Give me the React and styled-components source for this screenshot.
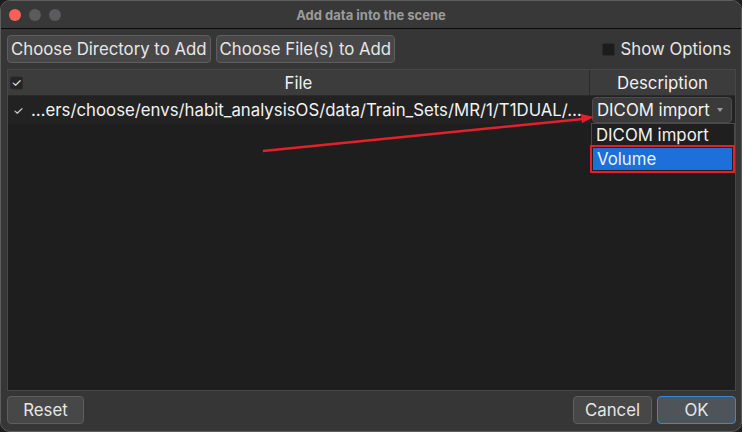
import React from "react";
import styled, { createGlobalStyle } from "styled-components";

const Global = createGlobalStyle`
  html, body { margin: 0; padding: 0; background: #1f1f1f; }
  body { font-family: "Inter", "Liberation Sans", sans-serif; }
  * { box-sizing: border-box; }
`;

const Window = styled.div`
  position: relative;
  width: 742px;
  height: 432px;
  background: #363636;
  border: 1px solid #5d5d5d;
  border-radius: 10px;
  overflow: hidden;
  display: flex;
  flex-direction: column;
  color: #e8e8e8;
`;

const TitleBar = styled.div`
  height: 28px;
  flex: none;
  display: flex;
  align-items: center;
  padding-left: 8px;
  background: #383838;
  border-bottom: 1px solid #0a0a0a;
`;

const Lights = styled.div`
  display: flex;
  gap: 8px;
`;

const Light = styled.span`
  width: 12px;
  height: 12px;
  border-radius: 50%;
  background: ${(p) => p.$c};
`;

const Title = styled.div`
  flex: 1;
  text-align: center;
  margin-right: 60px;
  font-size: 13px;
  font-weight: 700;
  color: #9b9b9b;
`;

const Body = styled.div`
  flex: 1;
  display: flex;
  flex-direction: column;
  padding: 6px 5px 7px 6px;
  gap: 5px;
`;

const Toolbar = styled.div`
  display: flex;
  align-items: center;
  gap: 5px;
  height: 28px;
  margin-bottom: 1px;
`;

const Button = styled.button`
  height: 28px;
  padding: 0 ${(p) => p.$pad || 3}px;
  min-width: ${(p) => p.$min || 0}px;
  font-family: inherit;
  font-size: 16.8px;
  color: #e6e6e6;
  background: ${(p) => (p.$default ? "#4f545a" : "#474747")};
  border: 1px solid ${(p) => (p.$default ? "#3d86d6" : "#5e5e5e")};
  border-radius: 4px;
  display: flex;
  align-items: center;
  justify-content: center;
  white-space: nowrap;
`;

const Spacer = styled.div`
  flex: 1;
`;

const OptionLabel = styled.label`
  display: flex;
  align-items: center;
  gap: 6px;
  font-size: 16.8px;
  color: #e6e6e6;
  margin-right: 5px;
`;

const Box = styled.span`
  width: 13px;
  height: 13px;
  background: ${(p) => (p.$dark ? "#1c1c1c" : "#252525")};
  border: 1px solid #2a2a2a;
  border-radius: 2px;
  display: inline-flex;
  align-items: center;
  justify-content: center;
  font-size: 12px;
  line-height: 1;
  color: #e8e8e8;
`;

const Table = styled.div`
  flex: 1;
  background: #1e1e1e;
  border: 1px solid #474747;
  display: flex;
  flex-direction: column;
  position: relative;
`;

const Grid = styled.div`
  display: grid;
  grid-template-columns: 1fr 146px;
  height: ${(p) => p.$h}px;
  background: ${(p) => p.$bg};
  border-bottom: 1px solid ${(p) => p.$line || "transparent"};
`;

const HeadCell = styled.div`
  display: flex;
  align-items: center;
  justify-content: center;
  font-size: 16.8px;
  color: #f0f0f0;
  position: relative;
  border-left: ${(p) => (p.$divider ? "1px solid #2a2a2a" : "none")};
`;

const HeadCheck = styled.div`
  position: absolute;
  left: 2px;
  top: 50%;
  transform: translateY(-50%);
  display: flex;
`;

const FileCell = styled.div`
  display: flex;
  align-items: center;
  gap: 8px;
  padding-left: 5px;
  font-size: 16.8px;
  color: #f2f2f2;
  white-space: nowrap;
  overflow: hidden;
`;

const Tick = styled.span`
  font-size: 12px;
  color: #dcdcdc;
  width: 10px;
`;

const DescCell = styled.div`
  display: flex;
  align-items: center;
  padding: 1px 3px 1px 3px;
`;

const Combo = styled.div`
  width: 100%;
  height: 26px;
  background: #3a3a3a;
  border: 1px solid #4c4c4c;
  border-radius: 4px;
  display: flex;
  align-items: center;
  justify-content: space-between;
  padding: 0 8px 0 4px;
  font-size: 16.8px;
  color: #f2f2f2;
`;

const Caret = styled.span`
  width: 0;
  height: 0;
  border-left: 3.5px solid transparent;
  border-right: 3.5px solid transparent;
  border-top: 4px solid #9a9a9a;
`;

const Popup = styled.div`
  position: absolute;
  left: 583px;
  top: 53px;
  width: 144px;
  background: #1f1f1f;
  border: 1px solid #4a4a4a;
  padding: 0 0 2px;
`;

const Item = styled.div`
  height: 22px;
  display: flex;
  align-items: center;
  padding-left: 4px;
  font-size: 16.8px;
  color: #f2f2f2;
  background: ${(p) => (p.$sel ? "#1d6fd9" : "transparent")};
  outline: ${(p) => (p.$sel ? "2.5px solid #e5202b" : "none")};
  outline-offset: 1px;
  margin: ${(p) => (p.$sel ? "2px 2px 0 1px" : "0")};
`;

const Arrow = styled.svg`
  position: absolute;
  left: 0;
  top: 0;
  pointer-events: none;
`;

const Footer = styled.div`
  display: flex;
  align-items: center;
  gap: 5px;
  height: 28px;
`;

export default function App() {
  return (
    <>
      <Global />
      <Window>
        <TitleBar>
          <Lights>
            <Light $c="#fe5f57" />
            <Light $c="#5b5b5d" />
            <Light $c="#5b5b5d" />
          </Lights>
          <Title>Add data into the scene</Title>
        </TitleBar>
        <Body>
          <Toolbar>
            <Button>Choose Directory to Add</Button>
            <Button>Choose File(s) to Add</Button>
            <Spacer />
            <OptionLabel>
              <Box $dark />
              Show Options
            </OptionLabel>
          </Toolbar>
          <Table>
            <Grid $h={26} $bg="#3c3c3c" $line="#2a2a2a">
              <HeadCell>
                <HeadCheck>
                  <Box>✓</Box>
                </HeadCheck>
                File
              </HeadCell>
              <HeadCell $divider>Description</HeadCell>
            </Grid>
            <Grid $h={28} $bg="#222222">
              <FileCell>
                <Tick>✓</Tick>
                …ers/choose/envs/habit_analysisOS/data/Train_Sets/MR/1/T1DUAL/…
              </FileCell>
              <DescCell>
                <Combo>
                  DICOM import
                  <Caret />
                </Combo>
              </DescCell>
            </Grid>
            <Popup>
              <Item>DICOM import</Item>
              <Item $sel>Volume</Item>
            </Popup>
          </Table>
          <Footer>
            <Button $min={77}>Reset</Button>
            <Spacer />
            <Button $min={79}>Cancel</Button>
            <Button $min={79} $default>
              OK
            </Button>
          </Footer>
        </Body>
        <Arrow width="742" height="432" viewBox="0 0 742 432">
          <line x1="262" y1="150" x2="582" y2="118" stroke="#e5202b" strokeWidth="2.5" />
          <polygon points="593,116 580,113 581,122" fill="#e5202b" />
        </Arrow>
      </Window>
    </>
  );
}
